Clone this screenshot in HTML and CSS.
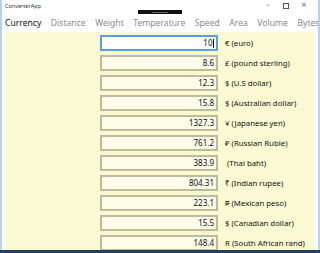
FILE: index.html
```html
<!DOCTYPE html>
<html>
<head>
<meta charset="utf-8">
<link rel="stylesheet" href="styles.css">
</head>
<body>
<div class="window">
  <div class="titlebar">
    <span class="title">ConverterApp</span>
    <span class="grip"></span>
    <div class="controls">
      <span class="ctl min">–</span>
      <span class="ctl max"></span>
      <span class="ctl close">×</span>
    </div>
  </div>
  <div class="tabs">
    <span class="tab active">Currency</span>
    <span class="tab">Distance</span>
    <span class="tab">Weight</span>
    <span class="tab">Temperature</span>
    <span class="tab">Speed</span>
    <span class="tab">Area</span>
    <span class="tab">Volume</span>
    <span class="tab">Bytes</span>
  </div>
  <div class="content">
    <div class="row"><div class="box focused">10<span class="caret"></span></div><span class="label">€ (euro)</span></div>
    <div class="row"><div class="box">8.6</div><span class="label">£ (pound sterling)</span></div>
    <div class="row"><div class="box">12.3</div><span class="label">$ (U.S dollar)</span></div>
    <div class="row"><div class="box">15.8</div><span class="label">$ (Australian dollar)</span></div>
    <div class="row"><div class="box">1327.3</div><span class="label">¥ (Japanese yen)</span></div>
    <div class="row"><div class="box">761.2</div><span class="label">₽ (Russian Ruble)</span></div>
    <div class="row"><div class="box">383.9</div><span class="label">&nbsp;(Thai baht)</span></div>
    <div class="row"><div class="box">804.31</div><span class="label">₹ (Indian rupee)</span></div>
    <div class="row"><div class="box">223.1</div><span class="label">₱ (Mexican peso)</span></div>
    <div class="row"><div class="box">15.5</div><span class="label">$ (Canadian dollar)</span></div>
    <div class="row"><div class="box">148.4</div><span class="label">R (South African rand)</span></div>
  </div>
  <div class="taskbar"></div>
</div>
</body>
</html>
```

FILE: styles.css
```css
html, body {
  margin: 0;
  padding: 0;
  background: #ffffff;
}
body {
  width: 320px;
  height: 253px;
  overflow: hidden;
  font-family: "Noto Sans", "Open Sans", sans-serif;
}
.window {
  box-sizing: border-box;
  width: 320px;
  height: 253px;
  display: flex;
  flex-direction: column;
  border-left: 2px solid #b3d3f2;
  border-right: 2px solid #b3d3f2;
  background: #ffffff;
}
.titlebar {
  height: 12px;
  flex: none;
  display: flex;
  align-items: flex-start;
  position: relative;
}
.title {
  font-size: 5.5px;
  color: #333;
  margin-left: 3px;
  margin-top: 3px;
  line-height: 6px;
}
.grip {
  position: absolute;
  left: 136px;
  top: 10px;
  width: 44px;
  height: 4px;
  background: #111;
}
.grip::after {
  content: "";
  position: absolute;
  left: 14px;
  top: 2px;
  width: 16px;
  height: 1px;
  background: #666;
}
.controls {
  margin-left: auto;
  display: flex;
  align-items: center;
  height: 11px;
  margin-right: 5px;
}
.ctl {
  width: 18px;
  font-size: 7px;
  color: #444;
  line-height: 11px;
  font-family: "DejaVu Sans", sans-serif;
  display: flex;
  justify-content: center;
  align-items: center;
}
.ctl.max::before {
  content: "";
  width: 4px;
  height: 4px;
  border: 1px solid #555;
}
.tabs {
  height: 20px;
  flex: none;
  display: flex;
  align-items: center;
  gap: 9.5px;
  padding-left: 3px;
  padding-top: 1px;
  box-sizing: border-box;
  white-space: nowrap;
  overflow: hidden;
}
.tab {
  flex: none;
  font-size: 8.6px;
  color: #8a8a8a;
  line-height: 14px;
}
.tab.active {
  color: #111;
}
.content {
  flex: 1;
  margin: 0 3px;
  background: #fafad2;
  overflow: hidden;
  display: flex;
  flex-direction: column;
  gap: 4px;
  padding-top: 3px;
}
.row {
  display: flex;
  align-items: center;
  flex: none;
  height: 16px;
}
.box {
  box-sizing: border-box;
  margin-left: 95px;
  width: 118px;
  height: 16px;
  border: 2px solid #bdbb9c;
  background: #fcfce9;
  font-size: 8px;
  color: #111;
  padding-right: 2px;
  line-height: 12px;
  display: flex;
  justify-content: flex-end;
  align-items: center;
}
.box.focused {
  background: #ffffff;
  border-color: #5a9de2;
}
.caret {
  display: inline-block;
  width: 1px;
  height: 9px;
  background: #111;
  margin-left: 0.5px;
}
.label {
  margin-left: 7px;
  font-size: 7.8px;
  color: #111;
  white-space: nowrap;
}
.taskbar {
  flex: none;
  height: 3px;
  margin: 0 -2px;
  background: #24405e;
}
```
